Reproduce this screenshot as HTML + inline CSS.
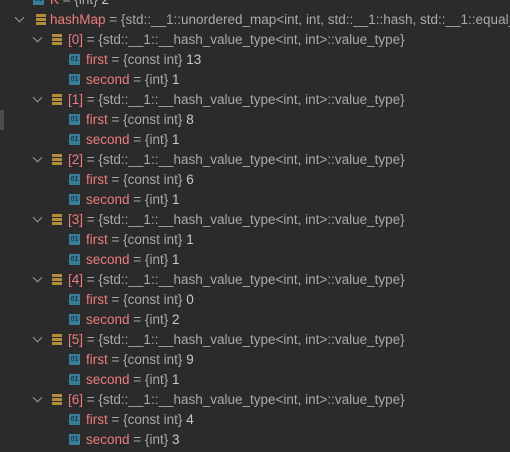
<!DOCTYPE html><html><head><style>
html{overflow:hidden}
body{margin:0;width:510px;height:452px;background:#2b2b2b;overflow:hidden;position:relative;font-family:"Liberation Sans",sans-serif;font-size:13.5px;}
.r{position:absolute;height:20px;line-height:20px;white-space:nowrap;color:#a9a9a9;max-width:460px;overflow:hidden}
.n{color:#ee7c7c}.v{color:#c8c8c8}
.ch{position:absolute;width:6px;height:6px;border-right:1.3px solid #9a9a9a;border-bottom:1.3px solid #9a9a9a;transform:rotate(45deg)}
.ls{position:absolute;width:10px;height:11px;background:linear-gradient(#b58b3c 0 3px,transparent 3px 4px,#b58b3c 4px 7px,transparent 7px 8px,#b58b3c 8px 11px)}
.o{position:absolute;width:11px;height:11px;background:#3a7c98;color:#1d3d4d;font-size:7px;line-height:11px;text-align:center;font-weight:bold}
</style></head><body>
<div style="position:absolute;left:0;top:110px;width:4px;height:20px;background:#4a4a4a"></div>
<div class="o" style="left:33px;top:-6px">01</div>
<div class="r" style="left:50px;top:-10px"><span class="n">K</span> = {int} <span class="v">2</span></div>
<div class="ch" style="left:16px;top:14px"></div><div class="ls" style="left:36px;top:14px"></div>
<div class="r" style="left:50px;top:10px"><span class="n">hashMap</span> = {std::__1::unordered_map&lt;int, int, std::__1::hash, std::__1::equal_to&lt;int&gt;&gt;}</div>
<div id="c"></div>
<script>
var v=[13,8,6,1,0,9,4],s=[1,1,1,1,2,1,3],h='';
for(var i=0;i<7;i++){var t=40+i*60;
h+='<div class="ch" style="left:34px;top:'+(t-6)+'px"></div><div class="ls" style="left:52px;top:'+(t-6)+'px"></div>';
h+='<div class="r" style="left:68px;top:'+(t-10)+'px"><span class="n">['+i+']</span> = {std::__1::__hash_value_type&lt;int, int&gt;::value_type}</div>';
h+='<div class="o" style="left:69px;top:'+(t+14)+'px">01</div><div class="r" style="left:86px;top:'+(t+10)+'px"><span class="n">first</span> = {const int} <span class="v">'+v[i]+'</span></div>';
h+='<div class="o" style="left:69px;top:'+(t+34)+'px">01</div><div class="r" style="left:86px;top:'+(t+30)+'px"><span class="n">second</span> = {int} <span class="v">'+s[i]+'</span></div>';}
document.getElementById('c').innerHTML=h;
</script>
</body></html>
